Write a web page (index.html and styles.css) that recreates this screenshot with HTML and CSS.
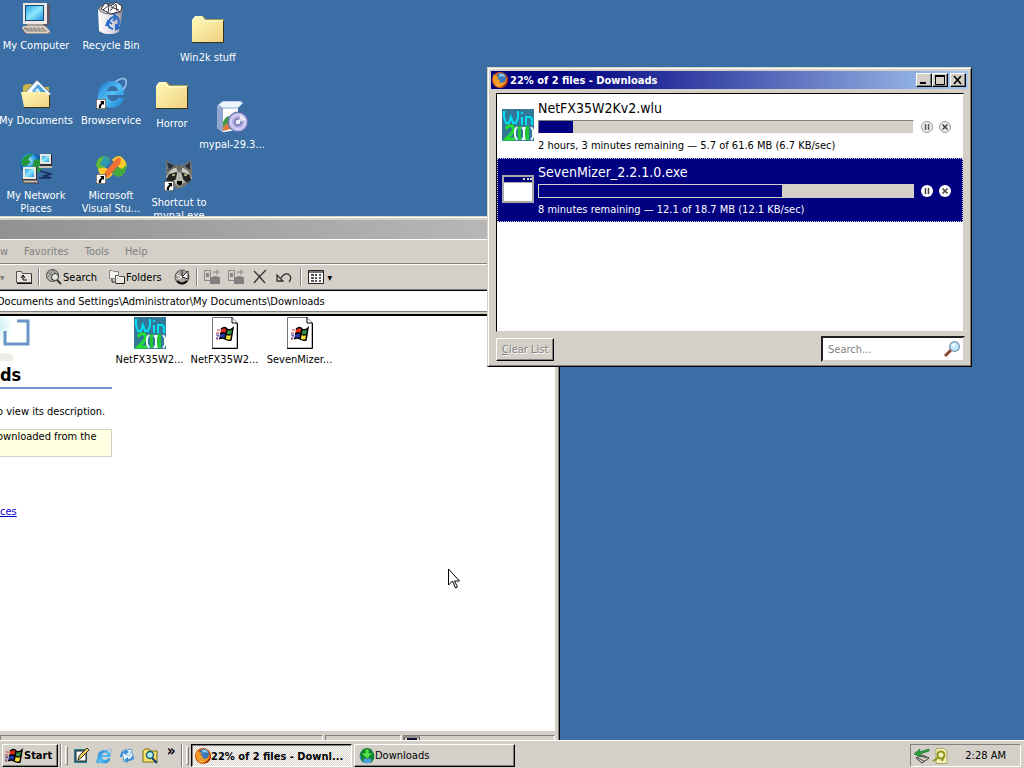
FILE: index.html
```html
<!DOCTYPE html>
<html lang="en">
<head>
<meta charset="utf-8">
<title>Desktop</title>
<link rel="stylesheet" href="styles.css">
</head>
<body>
<svg class="sprite" aria-hidden="true">
  <defs>
    <linearGradient id="gfold" x1="0" y1="0" x2="1" y2="1"><stop offset="0" stop-color="#fffbb8"/><stop offset="1" stop-color="#f0d080"/></linearGradient>
    <linearGradient id="gscr" x1="0" y1="0" x2="1" y2="1"><stop offset="0" stop-color="#2ba4e8"/><stop offset=".5" stop-color="#8fe6ff"/><stop offset="1" stop-color="#2398df"/></linearGradient>
    <linearGradient id="gie" x1="0" y1="0" x2="1" y2="1"><stop offset="0" stop-color="#1a71cb"/><stop offset=".5" stop-color="#52c0f7"/><stop offset="1" stop-color="#1a7bd0"/></linearGradient>
    <linearGradient id="gbin" x1="0" x2="1"><stop offset="0" stop-color="#fff"/><stop offset=".6" stop-color="#dcd5de"/><stop offset="1" stop-color="#8d8490"/></linearGradient>
    <radialGradient id="gcd"><stop offset=".15" stop-color="#fff"/><stop offset=".3" stop-color="#8b80c5"/><stop offset=".7" stop-color="#d8d4f5"/><stop offset="1" stop-color="#8e9ad2"/></radialGradient>
    <radialGradient id="gglobe" cx=".4" cy=".35"><stop offset="0" stop-color="#a9f2ff"/><stop offset=".6" stop-color="#2695d9"/><stop offset="1" stop-color="#0c4a95"/></radialGradient>
  </defs>
  <symbol id="arrow" viewBox="0 0 10 10"><path d="M0 0h10v10H0z" fill="#fff" stroke="#000"/><path d="M4 2h4v4L7 5C5 6 5 7 5 9H3C2 7 4 5 5.500 3.500z" fill="#000"/></symbol>
  <symbol id="pc" viewBox="0 0 32 32">
    <path d="M6 1h20l4 2v17l-3 4H6z" fill="#5e5866"/><path d="M3 1h24v21H3z" fill="#eee9e4"/><path d="M5 3h19v16H5z" fill="#14476f"/><path d="M6 4h17v14H6z" fill="url(#gscr)"/>
    <path d="M7 22h16l1 3H6z" fill="#a9a097"/><path d="M3 24h22l5 5v3H6l-4-5z" fill="#d9d0c5"/><path d="M4 25l3 4h20M6 25l3 4M10 25l2 4M14 25l2 4M18 25l2 4M22 25l3 4M4 27h20" fill="none" stroke="#8b817a"/><path d="M2 27l4 5h23v-2" fill="none" stroke="#59525b"/>
  </symbol>
  <symbol id="bin" viewBox="0 0 32 32">
    <path d="M3 7l1 22q9 6 20 1l4-23z" fill="url(#gbin)"/><ellipse cx="16" cy="7" rx="12" ry="5" fill="#ddd8dc" stroke="#625d69"/>
    <path d="M6 7l4-6 6 3 5-4 6 4-1 5-10 3z" fill="#fff" stroke="#37333d"/><path d="M8 8l6-5-1 8M15 9l6-7 1 7M16 5l8 3" fill="none" stroke="#37333d"/>
    <path d="M14 20q1-5 6-5m-2-3l4 3-4 4M23 16q2 6-1 9m4 0l-5 2v-5M18 27q-5-1-5-6m-2 3l2-5 4 3" fill="none" stroke="#256ac7" stroke-width="2"/>
  </symbol>
  <symbol id="folder" viewBox="0 0 32 32"><path d="M0 29V7l2-3 3-2h6l3 3h17l1 1v23z" fill="#a59850"/><path d="M0 28V6l3-4h7l3 4h18v22z" fill="url(#gfold)"/><path d="M1 8V6l2-3h6l3 4h18" fill="none" stroke="#fffde0"/><path d="M31.500 7v21.500H0" fill="none" stroke="#333318"/></symbol>
  <symbol id="docs" viewBox="0 0 32 32"><path d="M3 13V9l3-2h5l3 3h15v21H5z" fill="#c9b34c"/><path d="M6 15L17 3l14 14-8 9z" fill="#f6fbff" stroke="#7083a1"/><path d="M12 14l6-7 8 8-5 6z" fill="#4fa4dc"/><path d="M14 14l4-3 3 5z" fill="#c8f0ff"/><path d="M1 15h24l3 3h1v12H4z" fill="url(#gfold)"/><path d="M29.500 18v12.500H4" fill="none" stroke="#3c3513"/></symbol>
  <symbol id="ie" viewBox="0 0 32 32"><path d="M20 5C31-3 35 4 27 14" fill="none" stroke="#8db9e5" stroke-width="2"/><path d="M29 18H12q1 6 6 6 4 0 5-3h6Q26 31 16 31 3 30 3 18 4 5 16 4q13 0 13 14zM12 14h11q-1-5-5-5-5 0-6 5z" fill="url(#gie)"/><path d="M9 29Q-1 35 1 24 5 13 19 5 4 16 4 25q1 4 5 4z" fill="#48aef0"/></symbol>
  <symbol id="ie-link" viewBox="0 0 32 32"><use href="#ie"/><use href="#arrow" x="1" y="22" width="10" height="10"/></symbol>
  <symbol id="box" viewBox="0 0 32 32"><path d="M1 5l6-4h17l-3 4v24l-14 2-6-4z" fill="#cbdaf2"/><path d="M6 7h16v22L6 31z" fill="#fff"/><path d="M1 5l6 2v24l-6-4z" fill="#91a6cf"/><path d="M2 4l5-4h17l3 2-5 5H7z" fill="#edf5ff" stroke="#8caad9"/><path d="M7 21q4-9 9-4v9l-9 3z" fill="#3f9d49"/><path d="M7 26l8-7v9l-8 2z" fill="#e27943"/><circle cx="22" cy="21" r="10" fill="url(#gcd)" stroke="#53609f"/><circle cx="22" cy="21" r="3" fill="#e7eafa" stroke="#6674a4"/><path d="M25 14l-3 7 8-2z" fill="#fff" opacity=".7"/></symbol>
  <symbol id="network" viewBox="0 0 32 32"><circle cx="11" cy="12" r="11" fill="url(#gglobe)"/><path d="M1 10Q5 1 13 2L8 7l3 3-5 4-4-1zM14 8l7-1 1 10-7 6-3-6z" fill="#27953c"/><path d="M20 2h12v12H20z" fill="#2d2938"/><path d="M20 2h11v10H20z" fill="#e8e5dd"/><path d="M22 4h7v6h-7z" fill="url(#gscr)"/><path d="M19 14h13v2H19z" fill="#c8bfb7"/><path d="M3 15h14v14H3z" fill="#332e42"/><path d="M3 15h13v12H3z" fill="#ece8df"/><path d="M5 17h9v8H5z" fill="url(#gscr)"/><path d="M2 28h15l2 3H4z" fill="#c7bcae" stroke="#443b43"/><path d="M20 19l11 3-7 2 7 2H19" fill="none" stroke="#182b59" stroke-width="1.500"/></symbol>
  <symbol id="vs" viewBox="0 0 32 32"><path d="M1 13Q2 5 9 4q4 0 6 4l-6 8-5 3z" fill="#62b936"/><path d="M3 17l7-2 8 7q-4 5-8 5-5-2-7-10z" fill="#ffc72b"/><path d="M17 8q3-4 8-4 6 4 7 10l-4 7-6-8z" fill="#ffcb2a"/><path d="M32 12q-1 12-8 13-5-1-7-5l6-5 4 2z" fill="#49a93c"/><path d="M9 4q5 1 6 6l-5 6-5-4z" fill="#2a9aae"/><path d="M12 26q-4-2-2-6L21 7q5-3 5 1l-1 4z" fill="#f27136"/><use href="#arrow" x="1" y="22" width="10" height="10"/></symbol>
  <symbol id="raccoon" viewBox="0 0 32 32"><path d="M3 1l8 5h9l8-5 1 10 0 9-8 8-7 2-9-6-2-9z" fill="#73736f"/><path d="M4 3l7 4-5 4zM27 3l-5 4 5 4z" fill="#26303a"/><path d="M7 12l6-4 2 6 1 8-9 2-4-6zM19 8l6 4 4 7-5 5-6-2z" fill="#c9c9c2"/><path d="M6 15l8-2 1 6-8 5-4-3zM18 13l9 3 1 5-4 3-6-5z" fill="#242823"/><path d="M9 16h3M21 16h3" stroke="#d8c984" stroke-width="1.500"/><path d="M14 14l4-1 3 10-4 5-5-3z" fill="#b9b9ae"/><path d="M14 22h5v3l-2 2-3-2z" fill="#080808"/><path d="M7 9l-3 3M9 5l4 4M16 6v5M22 6l-4 4M27 25l-3-2" stroke="#4a5456"/><use href="#arrow" x="1" y="22" width="10" height="10"/></symbol>
  <symbol id="win200" viewBox="0 0 32 32"><path d="M0 0h32v32H0z" fill="#327899"/><path d="M2 2v6l2 6h3l2-6 2 6h3l2-6V2M20 8v8M20 3v2M24 16V8h4l2 2v6" fill="none" stroke="#00def3" stroke-width="2"/><path d="M4 20l2-3h4l2 3-2 4-6 6h9" fill="none" stroke="#23df32" stroke-width="3"/><path d="M16 17h3v14h-3zM23 17h4v14h-4z" fill="#20c837"/><path d="M15 18l-2 3v6l2 4M20 18l2 3v7l-2 3M23 18l-1 3v7l1 3M29 18l2 3v7l-2 3" fill="none" stroke="#effcff" stroke-width="2"/></symbol>
  <symbol id="flag" viewBox="0 0 18 16"><path d="M5 3q4-3 6 0l-1 5q-3-2-6 0z" fill="#d92d1e"/><path d="M11 3q3 2 6-1l-1 6q-3 2-6 0z" fill="#329245"/><path d="M4 8q3-2 6 0l-1 5q-3-2-6 0z" fill="#233bad"/><path d="M10 8q3 2 6 0l-1 6q-3 1-6-1z" fill="#f5df38"/><path d="M5 3q4-3 6 0 3 2 6-1l-2 12q-3 1-6-1-3-2-6 0M11 3L9 13M4 8q3-2 6 0 3 2 6 0" fill="none" stroke="#000" stroke-width="1.500"/><path d="M1 4h3M0 7h3M1 10h2M0 13h2" stroke="#c02e38"/><path d="M0 9h3M0 12h2" stroke="#2a34a0"/></symbol>
  <symbol id="file" viewBox="0 0 32 32"><path d="M3.500 31V.500H23l5 5V31z" fill="#fff" stroke="#777"/><path d="M23 0v6h5M28.500 6v25.500H3" fill="none" stroke="#000"/><use href="#flag" x="7" y="9" width="18" height="16"/></symbol>
  <symbol id="firefox" viewBox="0 0 16 16"><circle cx="8" cy="8" r="8" fill="#d85a12"/><circle cx="9" cy="6" r="5" fill="#3a78bc"/><path d="M7 2q5-1 6 3l-3-1-2 1z" fill="#8fd1ef"/><path d="M1 2l3 2 3 1-2 2 3 1-1 2 3 1 3-1 2-5q2 7-4 10-6 1-9-4-2-5 0-9z" fill="#f49a25"/><path d="M1 9q3 6 9 4-5 4-9-4z" fill="#ffd24c"/><path d="M14 3q2 5-1 9-3 3-6 3 9 1 9-7z" fill="#9f2c09"/></symbol>
  <symbol id="search" viewBox="0 0 16 16"><circle cx="6.500" cy="6.500" r="6" fill="#b8b5ad" stroke="#444"/><path d="M2 3l9 7M2 8l5-7 4 5-6 5" stroke="#777" fill="none"/><circle cx="9" cy="8" r="3.500" fill="#e8e8e4" stroke="#333"/><path d="M11 11l4 4" stroke="#333" stroke-width="2"/></symbol>
  <symbol id="folders" viewBox="0 0 16 16"><path d="M.500 9.500v-8h3l1 1h5v7z" fill="#f4f3ee" stroke="#888"/><path d="M6.500 14.500v-8h3l1 1h5v7z" fill="#e9e7df" stroke="#555"/><path d="M3 10v3h3M15.500 8v6.500H7" fill="none" stroke="#222"/></symbol>
  <symbol id="copy" viewBox="0 0 16 16"><path d="M.500 1.500h6v10h-6zM9 3h5M12 1l3 2-3 2" fill="none" stroke="#888"/><path d="M6 8h3l1-1h3l1 1h2v7H6z" fill="#808080"/><path d="M2 4h3v4H2z" fill="#888"/></symbol>
  <symbol id="go" viewBox="0 0 16 16"><circle cx="8" cy="8" r="7.500" fill="#3f8fd2"/><path d="M1 6q2-6 7-6l4 1 3 5v5l-3 4-4-2-5 1z" fill="#138431"/><path d="M4 12l4-3 5 3-2 3H6z" fill="#4aa0dd"/><path d="M6 1h4v4h4L8 11 2 5h4z" fill="#4fdf45" stroke="#12691e" stroke-width=".6"/></symbol>
  <symbol id="desk" viewBox="0 0 16 16"><path d="M1 1h13v14H1z" fill="#267d91"/><path d="M3 3h10v10H3z" fill="#fff" stroke="#222"/><path d="M5 12l1-4 8-8 2 2-8 8z" fill="#f2cf53" stroke="#342f25"/></symbol>
</svg>

<main class="desktop">
  <a class="item i-computer" href="#"><svg><use href="#pc"/></svg><span>My Computer</span></a>
  <a class="item i-bin" href="#"><svg><use href="#bin"/></svg><span>Recycle Bin</span></a>
  <a class="item i-win2k" href="#"><svg><use href="#folder"/></svg><span>Win2k stuff</span></a>
  <a class="item i-docs" href="#"><svg><use href="#docs"/></svg><span>My Documents</span></a>
  <a class="item i-browse" href="#"><svg><use href="#ie-link"/></svg><span>Browservice</span></a>
  <a class="item i-horror" href="#"><svg><use href="#folder"/></svg><span>Horror</span></a>
  <a class="item i-mypal" href="#"><svg><use href="#box"/></svg><span>mypal-29.3...</span></a>
  <a class="item i-network" href="#"><svg><use href="#network"/></svg><span>My Network<br>Places</span></a>
  <a class="item i-vs" href="#"><svg><use href="#vs"/></svg><span>Microsoft<br>Visual Stu...</span></a>
  <a class="item i-shortcut" href="#"><svg><use href="#raccoon"/></svg><span>Shortcut to<br>mypal.exe</span></a>

  <section class="explorer" aria-label="Downloads folder">
    <div class="ex-title"></div>
    <nav class="menu"><button>w</button><button>Favorites</button><button>Tools</button><button>Help</button></nav>
    <div class="tools">
      <button aria-label="Forward history" class="caret grey">▾</button>
      <button aria-label="Up"><svg class="s16" viewBox="0 0 16 16"><path d="M.500 13.500v-11h5l1 2h9v9z" fill="#e6e4dc" stroke="#555"/><path d="M1 14.500h15V5" fill="none" stroke="#111"/><path d="M5 9l2-3 2 3M7 7v4h4" fill="none" stroke="#000"/></svg></button>
      <i class="sep"></i>
      <button class="labelled"><svg class="s16"><use href="#search"/></svg>Search</button>
      <button class="labelled"><svg class="s16"><use href="#folders"/></svg>Folders</button>
      <button aria-label="History"><svg class="s16" viewBox="0 0 16 16"><circle cx="8" cy="8" r="7" fill="#aaa79f" stroke="#555"/><path d="M8 8V2M8 8l6-6v8z" fill="#fff" stroke="#222"/><path d="M3 12q5 5 10 0" fill="none" stroke="#111" stroke-width="2"/><path d="M3 6l5 2-4 2" fill="none" stroke="#fff"/></svg></button>
      <i class="sep"></i>
      <button class="wide" aria-label="Move to"><svg class="s16"><use href="#copy"/></svg></button>
      <button class="wide" aria-label="Copy to"><svg class="s16"><use href="#copy"/></svg></button>
      <button class="wide" aria-label="Delete"><svg class="s16" viewBox="0 0 16 16"><path d="M2 2l5 5 6 7M14 1L8 7l-6 7" fill="none" stroke="#333" stroke-width="1.300"/></svg></button>
      <button class="wide" aria-label="Undo"><svg class="s16" viewBox="0 0 16 16"><path d="M1 6v6h6zM5 9q3-5 7-4 5 3 1 8" fill="none" stroke="#333" stroke-width="1.300"/></svg></button>
      <i class="sep"></i>
      <button class="views" aria-label="Views"><svg class="s16" viewBox="0 0 16 16"><path d="M.500 1.500h15v13H.500z" fill="#fff" stroke="#222"/><path d="M1 3h14" stroke="#777" stroke-width="2"/><path d="M3 6h3M7 6h2M11 6h2M3 9h3M7 9h2M11 9h2M3 12h3M7 12h2M11 12h2" stroke="#222" stroke-width="1.500"/></svg><span class="caret">▾</span></button>
    </div>
    <div class="address"><input aria-label="Address" value="Documents and Settings\Administrator\My Documents\Downloads"></div>
    <div class="ex-body">
      <aside class="side">
        <svg class="side-art" viewBox="0 0 32 46"><defs><radialGradient id="gart" cx="0" cy=".3"><stop offset="0" stop-color="#d0f1f7"/><stop offset="1" stop-color="#fff"/></radialGradient></defs><path d="M0 0h26v34H0z" fill="url(#gart)"/><path d="M5 15v13h23V5h-11" fill="none" stroke="#6b94c7" stroke-width="3"/><path d="M0 38q8-3 14 2l-2 5H0z" fill="#eceee8"/></svg>
        <h1>ds</h1>
        <p class="desc">o view its description.</p>
        <p class="note">ownloaded from the</p>
        <a class="link" href="#">ces</a>
      </aside>
      <div class="files">
        <a class="file" href="#"><svg><use href="#win200"/></svg><span>NetFX35W2...</span></a>
        <a class="file" href="#"><svg><use href="#file"/></svg><span>NetFX35W2...</span></a>
        <a class="file" href="#"><svg><use href="#file"/></svg><span>SevenMizer...</span></a>
      </div>
    </div>
    <footer class="status"><span></span><span></span><span><svg viewBox="0 0 16 12"><path d="M.500 12V1h15v11" fill="none" stroke="#555"/><path d="M4 12V3h8v9" fill="#eef" stroke="#113" stroke-width="2"/></svg></span></footer>
  </section>

  <section class="dialog" aria-label="Downloads">
    <header class="titlebar"><svg class="s16"><use href="#firefox"/></svg><h2>22% of 2 files - Downloads</h2>
      <button aria-label="Minimize"><svg viewBox="0 0 12 10"><path d="M2 8h6" stroke="#000" stroke-width="2"/></svg></button>
      <button aria-label="Maximize"><svg viewBox="0 0 12 10"><path d="M1.500 1v8.500h9V1" fill="none" stroke="#000"/><path d="M1 1h10" stroke="#000" stroke-width="2"/></svg></button>
      <button class="close" aria-label="Close"><svg viewBox="0 0 12 10"><path d="M2 1l7 8M9 1L2 9" stroke="#000" stroke-width="1.600"/></svg></button>
    </header>
    <div class="list">
      <article class="row">
        <svg class="big"><use href="#win200"/></svg>
        <div class="info"><h3>NetFX35W2Kv2.wlu</h3><progress value="9" max="100" aria-label="NetFX35W2Kv2.wlu progress"></progress><p>2 hours, 3 minutes remaining — 5.7 of 61.6 MB (6.7 KB/sec)</p></div>
        <div class="acts"><button aria-label="Pause"><svg viewBox="0 0 12 12"><circle cx="6" cy="6" r="5.500" fill="#eee" stroke="#999"/><path d="M4.500 3v6M7.500 3v6" stroke="#555" stroke-width="1.500"/></svg></button><button aria-label="Cancel"><svg viewBox="0 0 12 12"><circle cx="6" cy="6" r="5.500" fill="#eee" stroke="#999"/><path d="M3.500 3.500l5 5M8.500 3.500l-5 5" stroke="#444" stroke-width="1.500"/></svg></button></div>
      </article>
      <article class="row selected">
        <svg class="big" viewBox="0 0 32 32"><path d="M1 3h30v26H1z" fill="#fff" stroke="#aaa" stroke-width="2"/><path d="M2 4h28v5H2z" fill="#00007b"/><path d="M21 6h2M25 6h2M28 6h2" stroke="#ddd" stroke-width="2"/><path d="M2 9.500h28" stroke="#aaa"/></svg>
        <div class="info"><h3>SevenMizer_2.2.1.0.exe</h3><progress value="65" max="100" aria-label="SevenMizer_2.2.1.0.exe progress"></progress><p>8 minutes remaining — 12.1 of 18.7 MB (12.1 KB/sec)</p></div>
        <div class="acts"><button aria-label="Pause"><svg viewBox="0 0 12 12"><circle cx="6" cy="6" r="6" fill="#fff"/><path d="M4.500 3v6M7.500 3v6" stroke="#444" stroke-width="1.500"/></svg></button><button aria-label="Cancel"><svg viewBox="0 0 12 12"><circle cx="6" cy="6" r="6" fill="#fff"/><path d="M3.500 3.500l5 5M8.500 3.500l-5 5" stroke="#444" stroke-width="1.500"/></svg></button></div>
      </article>
    </div>
    <footer class="dlg-foot">
      <button class="clear" disabled><u>C</u>lear List</button>
      <label class="find"><input type="text" placeholder="Search..." aria-label="Search downloads"><svg class="s16" viewBox="0 0 16 16"><path d="M7 9l-6 6" stroke="#8a452f" stroke-width="3"/><circle cx="10.500" cy="5.500" r="4.800" fill="#c2eafa" stroke="#7494ae" stroke-width="1.300"/><path d="M8 5l3-2" stroke="#fff" stroke-width="2"/></svg></label>
    </footer>
  </section>

  <svg class="cursor" viewBox="0 0 14 22" aria-hidden="true"><path d="M1.500 1v16l4-4 3 7 2-1-3-6h5z" fill="#fff" stroke="#000"/></svg>
</main>

<footer class="taskbar">
  <button class="start"><svg viewBox="0 0 18 16"><use href="#flag"/></svg>Start</button>
  <i class="sep"></i><i class="grip"></i>
  <nav class="quick">
    <button aria-label="Show Desktop"><svg class="s16"><use href="#desk"/></svg></button>
    <button aria-label="Internet Explorer"><svg class="s16"><use href="#ie"/></svg></button>
    <button aria-label="Outlook Express"><svg class="s16" viewBox="0 0 16 16"><path d="M3 3l9-2 3 10-10 3z" fill="#e9f6ff" stroke="#5b9bcb"/><path d="M3 4l7 4 3-6" fill="none" stroke="#8bbade"/><path d="M1 9q0-6 5-6V1l4 3-4 3V5Q3 5 3 9zM15 8q-1 5-6 5v2l-4-3 4-3v2q3 0 4-3z" fill="#3d8fd3"/></svg></button>
    <button aria-label="Explore"><svg class="s16" viewBox="0 0 16 16"><path d="M1 14V3l2-2h4l1 2h7v11z" fill="#f7e36a" stroke="#7d6b12"/><circle cx="8" cy="7" r="3.500" fill="#b5eef5" stroke="#16616f" stroke-width="1.500"/><path d="M10 10l5 5" stroke="#163d77" stroke-width="2"/></svg></button>
  </nav>
  <button class="more" aria-label="More">»</button>
  <i class="sep"></i><i class="grip"></i>
  <button class="task active"><svg class="s16"><use href="#firefox"/></svg>22% of 2 files - Downl...</button>
  <button class="task"><svg class="s16"><use href="#go"/></svg>Downloads</button>
  <div class="tray">
    <svg class="s16" viewBox="0 0 16 16"><path d="M2 10l6-3 7 3-7 5z" fill="#d7d4cb" stroke="#333"/><path d="M4 10l6 3M7 8l5 2" stroke="#444"/><path d="M15 1L5 4l1-3-6 5 7 3-1-3 9-3z" fill="#27a53a" stroke="#126222" stroke-width=".6"/></svg>
    <svg class="s16" viewBox="0 0 16 16"><path d="M4 .500h8l3 3v12H4z" fill="#f6f2ba" stroke="#aaa56b"/><circle cx="9" cy="7" r="3.500" fill="none" stroke="#8d951c" stroke-width="2"/><path d="M1 13l5-3M12 8l-2 5" stroke="#8d951c" stroke-width="2"/></svg>
    <time>2:28 AM</time>
  </div>
</footer>
</body>
</html>
```
FILE: styles.css
```css
* { box-sizing: border-box; }
body {
  margin: 0;
  height: 100vh;
  display: flex;
  flex-direction: column;
  overflow: hidden;
  background: #3a6ea5;
  color: #000;
  font: 11px/13px "DejaVu Sans Condensed", "DejaVu Sans", sans-serif;
}
h1, h2, h3, p { margin: 0; font: inherit; }
svg { display: block; flex: none; }
button { font: inherit; color: inherit; background: none; border: 0; padding: 0; margin: 0; display: flex; align-items: center; white-space: nowrap; }
.sprite { position: absolute; width: 0; height: 0; }
.s16 { width: 16px; height: 16px; }

.desktop { position: relative; flex: 1; min-height: 0; overflow: hidden; }

/* desktop icons */
.item { position: absolute; width: 76px; display: flex; flex-direction: column; align-items: center; gap: 5px; color: #fff; text-align: center; text-decoration: none; white-space: nowrap; }
.item svg, .file svg { width: 32px; height: 32px; }
.i-computer { left: -2px; top: 2px; }
.i-bin { left: 73px; top: 2px; }
.i-win2k { left: 170px; top: 14px; }
.i-docs { left: -2px; top: 77px; }
.i-browse { left: 73px; top: 77px; }
.i-horror { left: 134px; top: 80px; }
.i-mypal { left: 194px; top: 101px; }
.i-network { left: -2px; top: 152px; }
.i-vs { left: 73px; top: 152px; }
.i-shortcut { left: 141px; top: 159px; }

/* folder window */
.explorer { position: absolute; left: 0; top: 216px; bottom: 0; width: 560px; display: flex; flex-direction: column; background: #d4d0c8; border-top: 1px solid #d4d0c8; border-right: 1px solid #000; padding: 3px 4px 0 0; box-shadow: inset 0 1px #fff, inset -1px 0 #808080; }
.ex-title { height: 19px; background: linear-gradient(90deg, #929292, #bcbcbc); }
.menu { height: 25px; display: flex; align-items: center; gap: 16px; color: #808080; border-top: 1px solid #fff; border-bottom: 1px solid #808080; }
.tools { height: 26px; display: flex; align-items: center; gap: 4px; border-top: 1px solid #fff; border-bottom: 1px solid #808080; }
.tools .labelled { gap: 1px; margin-right: 8px; }
.tools .wide { margin-right: 4px; }
.caret { width: 12px; font-size: 10px; }
.grey { color: #808080; }
.sep { align-self: stretch; width: 2px; margin: 3px 2px; border-left: 1px solid #808080; border-right: 1px solid #fff; }
.tools .wide + .sep { margin-left: 0; }
.address { border-top: 1px solid #000; border-bottom: 1px solid #808080; }
.address input { display: block; width: 100%; height: 20px; border: 0; padding: 0; font: inherit; background: #fff; text-indent: -3px; }
.ex-body { flex: 1; min-height: 0; display: flex; margin-top: 2px; background: #fff; border-top: 2px solid #000; overflow: hidden; }
.side { width: 112px; white-space: nowrap; }
.side-art { width: 32px; height: 46px; }
.side h1 { font-size: 18px; line-height: 26px; height: 27px; font-weight: bold; border-bottom: 2px solid #6b94c7; }
.desc { margin-top: 16px; text-indent: -3px; }
.note { height: 28px; margin-top: 11px; background: #ffffe1; border: 1px solid #d4d0c8; border-left: 0; text-indent: -3px; }
.link { display: block; margin-top: 48px; color: #00c; }
.files { flex: 1; display: flex; padding: 1px 0 0; }
.file { width: 75px; display: flex; flex-direction: column; align-items: center; gap: 4px; color: #000; text-decoration: none; white-space: nowrap; }
.status { height: 9px; flex: none; display: grid; grid-template-columns: 325fr 77fr 153fr; gap: 2px; padding-top: 4px; overflow: hidden; }
.status span { border: 1px solid #808080; border-right-color: #fff; border-bottom: 0; overflow: hidden; }
.status svg { width: 16px; height: 12px; }

/* download manager */
.dialog { position: absolute; left: 487px; top: 67px; width: 485px; display: flex; flex-direction: column; background: #d4d0c8; border: 1px solid; border-color: #d4d0c8 #000 #000 #d4d0c8; padding: 3px; box-shadow: inset 1px 1px #fff, inset -1px -1px #808080; }
.titlebar { height: 18px; display: flex; align-items: center; gap: 2px; padding: 0 2px 0 1px; background: linear-gradient(90deg, #000080 15%, #a6caf0); color: #fff; }
.titlebar h2 { flex: 1; font-weight: bold; }
.titlebar button { width: 16px; height: 14px; margin-right: -2px; justify-content: center; background: #d4d0c8; border: 1px solid; border-color: #fff #000 #000 #fff; box-shadow: inset -1px -1px #808080; }
.titlebar .close { margin: 0 0 0 2px; }
.titlebar button svg { width: 12px; height: 10px; }
.list { height: 239px; margin: 4px 4px 0 5px; background: #fff; border: 1px solid; border-color: #000 #d4d0c8 #d4d0c8 #000; }
.row { height: 64px; display: flex; align-items: center; gap: 4px; padding: 0 11px 2px 4px; border: 1px dotted transparent; }
.row.selected { background: #000080; color: #fff; border-color: #c8c8e0; }
.big { width: 32px; height: 32px; }
.info { flex: 1; min-width: 0; }
.info h3 { font-size: 14px; line-height: 18px; }
.info p { margin-top: 5px; white-space: nowrap; }
progress { display: block; width: 100%; height: 14px; margin-top: 3px; appearance: none; border: 1px solid; border-color: #808080 #fff #fff #808080; background: #d4d0c8; }
progress::-webkit-progress-bar { background: #d4d0c8; }
progress::-webkit-progress-value { background: #000080; }
.selected progress { border-color: #d4d0c8; }
.acts { display: flex; gap: 6px; margin: 4px 0 0 3px; }
.acts svg { width: 12px; height: 12px; }
.dlg-foot { display: flex; justify-content: space-between; align-items: center; padding: 4px 3px 1px 5px; }
.clear { height: 23px; padding: 0 5px; color: #808080; text-shadow: 1px 1px #fff; border: 1px solid; border-color: #fff #000 #000 #fff; box-shadow: inset -1px -1px #808080; }
.find { display: flex; align-items: center; width: 144px; height: 26px; padding: 0 3px; background: #fff; border: 2px solid; border-color: #202020 #d4d0c8 #d4d0c8 #202020; }
.find input { flex: 1; min-width: 0; border: 0; padding: 0 2px; font: inherit; background: none; }
.find input::placeholder { color: #808080; opacity: 1; }

.cursor { position: absolute; left: 447px; top: 568px; width: 14px; height: 22px; }

/* taskbar */
.taskbar { position: relative; height: 28px; flex: none; display: flex; align-items: center; padding: 3px 3px 1px 2px; background: #d4d0c8; border-top: 1px solid #fff; }
.grip { align-self: stretch; width: 3px; margin: 2px 1px; border: 1px solid; border-color: #fff #808080 #808080 #fff; }
.taskbar .sep { margin: 0 2px; }
.start { width: 56px; height: 23px; gap: 1px; padding-left: 2px; font-weight: bold; border: 1px solid; border-color: #fff #000 #000 #fff; box-shadow: inset -1px -1px #808080; }
.start svg { width: 18px; height: 16px; }
.quick { display: flex; gap: 7px; margin-left: 4px; }
.more { width: 16px; margin-left: 5px; padding-bottom: 8px; justify-content: center; font-size: 15px; font-weight: bold; }
.task { width: 161px; height: 23px; margin: 0 1px; padding-left: 4px; border: 1px solid; border-color: #fff #000 #000 #fff; box-shadow: inset -1px -1px #808080; overflow: hidden; }
.task.active { padding: 1px 0 0 3px; font-weight: bold; background: repeating-conic-gradient(#fff 0 25%, #d4d0c8 0 50%) 0 0 / 2px 2px; border-color: #000 #fff #fff #000; box-shadow: inset 1px 1px #808080; }
.tray { margin-left: auto; width: 111px; height: 23px; display: flex; align-items: center; gap: 2px; padding: 0 14px 0 3px; border: 1px solid; border-color: #808080 #fff #fff #808080; }
.tray time { margin-left: auto; }
```
